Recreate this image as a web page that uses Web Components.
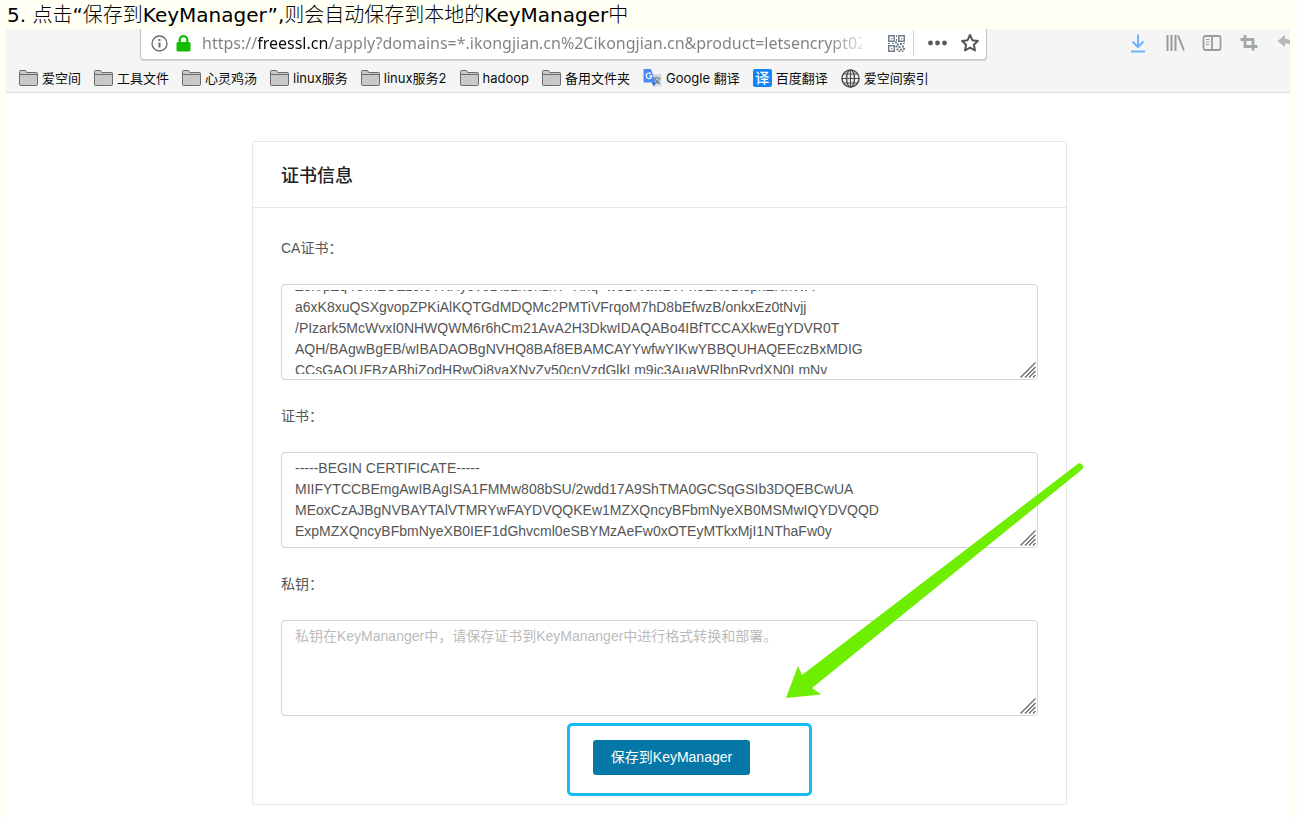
<!DOCTYPE html>
<html lang="zh-CN">
<head>
<meta charset="utf-8">
<title>KeyManager</title>
<style>
body {
    margin: 0;
    background: #fffff3;
    font-family: "Liberation Sans", "Noto Sans CJK SC", sans-serif;
    font-size: 14px;
}
</style>
</head>
<body>

<step-item number="5">点击“保存到KeyManager”,则会自动保存到本地的KeyManager中</step-item>

<browser-window>
    <url-bar slot="toolbar" url="https://freessl.cn/apply?domains=*.ikongjian.cn%2Cikongjian.cn&amp;product=letsencrypt02"></url-bar>
    <tool-buttons slot="toolbar"></tool-buttons>

    <bookmark-link slot="bookmarks">爱空间</bookmark-link>
    <bookmark-link slot="bookmarks">工具文件</bookmark-link>
    <bookmark-link slot="bookmarks">心灵鸡汤</bookmark-link>
    <bookmark-link slot="bookmarks">linux服务</bookmark-link>
    <bookmark-link slot="bookmarks">linux服务2</bookmark-link>
    <bookmark-link slot="bookmarks">hadoop</bookmark-link>
    <bookmark-link slot="bookmarks">备用文件夹</bookmark-link>
    <bookmark-link slot="bookmarks" icon="google">Google 翻译</bookmark-link>
    <bookmark-link slot="bookmarks" icon="baidu">百度翻译</bookmark-link>
    <bookmark-link slot="bookmarks" icon="globe">爱空间索引</bookmark-link>

    <info-card>
        <span slot="title">证书信息</span>
        <text-field label="CA证书：" scroll="14">Z8h/pZq4UmEUEz9l6YKHy9v6Dlb2honzhT+Xhq+w3Brvaw2VFn3EK6BlspkENnWA
a6xK8xuQSXgvopZPKiAlKQTGdMDQMc2PMTiVFrqoM7hD8bEfwzB/onkxEz0tNvjj
/PIzark5McWvxI0NHWQWM6r6hCm21AvA2H3DkwIDAQABo4IBfTCCAXkwEgYDVR0T
AQH/BAgwBgEB/wIBADAOBgNVHQ8BAf8EBAMCAYYwfwYIKwYBBQUHAQEEczBxMDIG
CCsGAQUFBzABhiZodHRwOi8vaXNyZy50cnVzdGlkLm9jc3AuaWRlbnRydXN0LmNv</text-field>
        <text-field label="证书：">-----BEGIN CERTIFICATE-----
MIIFYTCCBEmgAwIBAgISA1FMMw808bSU/2wdd17A9ShTMA0GCSqGSIb3DQEBCwUA
MEoxCzAJBgNVBAYTAlVTMRYwFAYDVQQKEw1MZXQncyBFbmNyeXB0MSMwIQYDVQQD
ExpMZXQncyBFbmNyeXB0IEF1dGhvcml0eSBYMzAeFw0xOTEyMTkxMjI1NThaFw0y</text-field>
        <text-field label="私钥：" placeholder="私钥在KeyMananger中，请保存证书到KeyMananger中进行格式转换和部署。"></text-field>
        <mark-box slot="actions">
            <push-button>保存到KeyManager</push-button>
        </mark-box>
        <mark-arrow slot="overlay"></mark-arrow>
    </info-card>
</browser-window>

<script>
customElements.define('step-item', class extends HTMLElement {
    constructor() {
        super();
        this.attachShadow({ mode: 'open' }).innerHTML = `
        <style>
        :host {
            display: block;
            padding: 2px 7px 0;
            color: #000;
            font: 20px/27px "DejaVu Sans", "Noto Sans CJK SC Light", "Noto Sans CJK SC", sans-serif;
        }
        p { margin: 0; }
        </style>
        <p><span id=number></span> <slot></slot></p>
        `;
    }
    connectedCallback() {
        this.shadowRoot.querySelector('#number').textContent = this.getAttribute('number') + '.';
    }
});

customElements.define('browser-window', class extends HTMLElement {
    constructor() {
        super();
        this.attachShadow({ mode: 'open' }).innerHTML = `
        <style>
        :host {
            display: block;
            margin: 0 8px 0 6px;
            background: #fff;
            overflow: hidden;
        }
        header {
            background: #f5f5f5;
            border-bottom: 1px solid #dcdcdc;
        }
        #toolbar {
            display: flex;
            align-items: flex-start;
            padding-left: 134px;
            height: 34px;
        }
        nav {
            display: flex;
            gap: 13px;
            padding: 0 13px;
            height: 29px;
            overflow: hidden;
        }
        main { padding: 48px 223px 14px 246px; }
        </style>
        <header>
            <div id=toolbar><slot name=toolbar></slot></div>
            <nav><slot name=bookmarks></slot></nav>
        </header>
        <main><slot></slot></main>
        `;
    }
});

customElements.define('url-bar', class extends HTMLElement {
    constructor() {
        super();
        this.attachShadow({ mode: 'open' }).innerHTML = `
        <style>
        :host {
            flex: 1;
            min-width: 0;
            box-sizing: border-box;
            display: flex;
            align-items: center;
            height: 31px;
            padding: 0 6px 2px 10px;
            background: #fff;
            border: 1px solid #c4c4c4;
            border-top: 0;
            border-radius: 0 0 4px 4px;
            box-shadow: 0 1px 1px #d4d4d4;
        }
        svg { display: block; flex: none; }
        button {
            flex: none;
            padding: 0;
            border: 0;
            background: none;
        }
        #lock { margin: 0 11px 0 8px; }
        /* host name in black, the rest in grey, end faded out */
        input {
            flex: 1;
            min-width: 0;
            height: 28px;
            padding: 0;
            border: 0;
            outline: 0;
            font: 16px "Noto Sans", sans-serif;
            color: #808080;
            -webkit-text-fill-color: transparent;
            background: linear-gradient(to right, #808080 55px, #0c0c0d 55px, #0c0c0d 127px, #808080 127px, #808080 626px, #80808000 670px);
            -webkit-background-clip: text;
            background-clip: text;
        }
        #qr { margin: 0 8px 0 26px; }
        i {
            width: 1px;
            height: 26px;
            background: #d2d2d2;
        }
        #more { margin: 0 13px 0 14px; }
        </style>
        <button aria-label="网站信息">
            <svg width="17" height="17" viewBox="0 0 17 17" fill="none" stroke="#6a6a6a">
                <circle cx="8.5" cy="8.5" r="7.5" stroke-width="1.3"/>
                <path d="M8.5 7.5v5" stroke-width="2"/>
                <path d="M8.5 4v2" stroke-width="2"/>
            </svg>
        </button>
        <svg id=lock width="15" height="17" viewBox="0 0 15 17">
            <path d="M3.7 8V5a3.8 3.8 0 0 1 7.600 0v3" fill="none" stroke="#12bc00" stroke-width="2.200"/>
            <rect x=".5" y="7" width="14" height="9.500" rx="1.500" fill="#12bc00"/>
        </svg>
        <input type=text aria-label="网址" spellcheck=false>
        <button id=qr aria-label="二维码">
            <svg width="17" height="17" viewBox="0 0 17 17" fill="#74808c">
                <path fill-rule="evenodd" d="M0 0h7v7H0zM1.500 1.500v4h4v-4zM10 0h7v7h-7zM11.500 1.500v4h4v-4zM0 10h7v7H0zM1.500 11.500v4h4v-4z"/>
                <path d="M3 3h1.200v1.200H3zM13 3h1.200v1.200H13zM3 13h1.200v1.200H3zM8 0h1v2H8zM8 4h1v2H8zM7 6.500h2v2H7zM0 8h2v1H0zM4 8h2v1H4zM9 8.500h2v2H9zM12 8h2v2h-2zM15 8h2v1h-2zM7.500 10.500h2v2h-2zM10.500 11h2v2h-2zM14 10.500h2v2h-2zM8.500 13.500h2v2h-2zM12 13.500h2v2h-2zM15 13h2v2h-2zM10.500 15.500h2V17h-2zM14 15.500h1.500V17H14z"/>
            </svg>
        </button>
        <i></i>
        <button id=more aria-label="更多操作">
            <svg width="19" height="6" viewBox="0 0 19 6" fill="#5a5a5a">
                <circle cx="2.500" cy="3" r="2.400"/><circle cx="9.500" cy="3" r="2.400"/><circle cx="16.500" cy="3" r="2.400"/>
            </svg>
        </button>
        <button aria-label="添加书签">
            <svg width="20" height="20" viewBox="0 0 20 20" fill="none" stroke="#555" stroke-width="2" stroke-linejoin="round">
                <path d="M10 2l2.400 5.200 5.600.7-4.100 3.900 1.100 5.700L10 14.700l-5 2.800 1.100-5.700L2 7.900l5.600-.7z"/>
            </svg>
        </button>
        `;
    }
    connectedCallback() {
        this.shadowRoot.querySelector('input').value = this.getAttribute('url');
    }
});

customElements.define('tool-buttons', class extends HTMLElement {
    constructor() {
        super();
        this.attachShadow({ mode: 'open' }).innerHTML = `
        <style>
        :host {
            flex: 0 0 303px;
            box-sizing: border-box;
            display: flex;
            gap: 17px;
            padding: 4px 0 0 141px;
            overflow: hidden;
        }
        button {
            flex: none;
            padding: 0;
            border: 0;
            background: none;
        }
        svg { display: block; }
        </style>
        <button aria-label="下载">
            <svg width="20" height="20" viewBox="0 0 20 20" fill="none" stroke="#6db4fb" stroke-width="2">
                <path d="M10 1.500v12M4.500 8.500l5.500 5.500 5.500-5.500M3 18.500h14"/>
            </svg>
        </button>
        <button aria-label="书库">
            <svg width="20" height="20" viewBox="0 0 20 20" fill="none" stroke="#9b9b9b" stroke-width="2">
                <path d="M2.500 2v16M6.500 2v16M10.500 2v16M13 2.500l6 15"/>
            </svg>
        </button>
        <button aria-label="侧栏">
            <svg width="20" height="20" viewBox="0 0 20 20" fill="none" stroke="#9b9b9b">
                <rect x="1.500" y="3" width="17" height="14" rx="2" stroke-width="1.800"/>
                <path d="M10 3v14" stroke-width="1.800"/>
                <path d="M4 6.500h3.500M4 9h3.500M4 11.500h3" stroke-width="1.200"/>
            </svg>
        </button>
        <button aria-label="截图">
            <svg width="20" height="20" viewBox="0 0 20 20" fill="none" stroke="#a2a9ac" stroke-width="2.800">
                <path d="M1.500 6.500h12.500v11M6 2v11.500h12.500"/>
            </svg>
        </button>
        <button aria-label="撤销">
            <svg width="20" height="20" viewBox="0 0 20 20" fill="#b3b8ba">
                <path d="M1.500 8L9 2v4c6 0 9 3 9 8 0 1-1 2-1.500 2.500 0-4-2.500-6-7.500-6V14z"/>
            </svg>
        </button>
        `;
    }
});

const bookmarkIcons = {
    folder: `
        <svg width="19" height="16" viewBox="0 0 19 16" fill="#c9c9c9" stroke="#6b6b6b">
            <path d="M.5 14V1.500q0-1 1-1h4.500q1 0 1.300 1l.4 1H17.500q1 0 1 1V14.500q0 1-1 1h-16q-1 0-1-1.500z"/>
            <path d="M1 4.500h17" fill="none"/>
        </svg>`,
    google: `
        <svg width="19" height="18" viewBox="0 0 19 18">
            <path d="M7 5h10.500q1 0 1 1v10.500q0 1-1 1H11z" fill="#d8dade"/>
            <path d="M10.500 9h7M14 7.500V9M12 9.500q1.500 4 5 5M16.500 9.500q-1.500 4-5 5.500" fill="none" stroke="#6c8393" stroke-width="1.200"/>
            <path d="M1.500 0H8l4.500 13.500H1.500q-1 0-1-1V1q0-1 1-1z" fill="#4a8af4"/>
            <path d="M8.500 13.500h4L11 17.500z" fill="#2e5fc0"/>
            <path d="M8 4.800a2.800 2.800 0 1 0 .8 2H6.300" fill="none" stroke="#fff" stroke-width="1.200"/>
        </svg>`,
    baidu: `<b>译</b>`,
    globe: `
        <svg width="19" height="19" viewBox="0 0 19 19" fill="none" stroke="#4f4f4f" stroke-width="1.500">
            <circle cx="9.500" cy="9.500" r="8.500"/>
            <ellipse cx="9.500" cy="9.500" rx="4" ry="8.500"/>
            <path d="M1 9.500h17M2.500 5h14M2.500 14h14M9.500 1v17" stroke-width="1.200"/>
        </svg>`,
};

customElements.define('bookmark-link', class extends HTMLElement {
    constructor() {
        super();
        this.attachShadow({ mode: 'open' }).innerHTML = `
        <style>
        :host {
            display: block;
            flex: none;
            font: 13px/30px Inter, "Noto Sans CJK SC", sans-serif;
        }
        a {
            display: flex;
            align-items: center;
            gap: 4px;
            color: #0c0c0d;
            text-decoration: none;
        }
        #icon { display: flex; }
        b {
            width: 19px;
            border-radius: 2px;
            background: #1584f8;
            color: #fff;
            font-size: 14px;
            font-weight: 500;
            line-height: 18px;
            text-align: center;
        }
        </style>
        <a href="#"><span id=icon></span><slot></slot></a>
        `;
    }
    connectedCallback() {
        let icon = this.getAttribute('icon') || 'folder';
        this.shadowRoot.querySelector('#icon').innerHTML = bookmarkIcons[icon];
    }
});

customElements.define('info-card', class extends HTMLElement {
    constructor() {
        super();
        this.attachShadow({ mode: 'open' }).innerHTML = `
        <style>
        :host {
            display: block;
            position: relative;
            border: 1px solid #e6e6e6;
            border-radius: 2px;
        }
        h2 {
            margin: 0;
            padding: 19px 28px 16px;
            border-bottom: 1px solid #e6e6e6;
            color: #222;
            font-size: 18px;
            font-weight: 500;
            line-height: 30px;
        }
        #body { padding: 4px 28px 0; }
        #actions {
            display: flex;
            justify-content: center;
            padding: 7px 0 8px 60px;
        }
        </style>
        <h2><slot name=title></slot></h2>
        <div id=body>
            <slot></slot>
            <div id=actions><slot name=actions></slot></div>
        </div>
        <slot name=overlay></slot>
        `;
    }
});

customElements.define('text-field', class extends HTMLElement {
    constructor() {
        super();
        this.attachShadow({ mode: 'open' }).innerHTML = `
        <style>
        :host {
            display: block;
            color: #555;
        }
        label {
            display: block;
            line-height: 72px;
        }
        #box {
            position: relative;
            padding: 5px 13px;
            border: 1px solid #d6d6d6;
            border-radius: 4px;
            background: #fff;
        }
        textarea {
            display: block;
            box-sizing: border-box;
            width: 100%;
            height: 84px;
            padding: 0;
            border: 0;
            outline: 0;
            resize: none;
            overflow: hidden;
            background: none;
            color: inherit;
            font: inherit;
            line-height: 21px;
        }
        textarea::placeholder { color: #bbb; }
        svg {
            position: absolute;
            right: 1px;
            bottom: 1px;
        }
        </style>
        <label for=input></label>
        <div id=box>
            <textarea id=input spellcheck=false></textarea>
            <svg width="16" height="16" viewBox="0 0 16 16" fill="none" stroke="#666" stroke-width="1.200">
                <path d="M.5 15.500l15-15M5 15.500L15.500 5M9 15.500l6.500-6.500M13 15.500l2.500-2.500"/>
            </svg>
        </div>
        `;
    }
    connectedCallback() {
        let input = this.shadowRoot.querySelector('textarea');
        this.shadowRoot.querySelector('label').textContent = this.getAttribute('label');
        input.placeholder = this.getAttribute('placeholder') || '';
        input.value = this.textContent;
        input.scrollTop = this.getAttribute('scroll') || 0;
    }
});

customElements.define('push-button', class extends HTMLElement {
    constructor() {
        super();
        this.attachShadow({ mode: 'open' }).innerHTML = `
        <style>
        :host { display: block; }
        button {
            display: block;
            padding: 0 18px;
            border: 0;
            border-radius: 3px;
            background: #0678a8;
            color: #fff;
            font: inherit;
            line-height: 35px;
            white-space: nowrap;
        }
        </style>
        <button><slot></slot></button>
        `;
    }
});

// blue frame drawn round a control
customElements.define('mark-box', class extends HTMLElement {
    constructor() {
        super();
        this.attachShadow({ mode: 'open' }).innerHTML = `
        <style>
        :host {
            display: block;
            padding: 14px 59px 18px 23px;
            border: 3px solid #14bdf4;
            border-radius: 5px;
        }
        </style>
        <slot></slot>
        `;
    }
});

customElements.define('mark-arrow', class extends HTMLElement {
    constructor() {
        super();
        this.attachShadow({ mode: 'open' }).innerHTML = `
        <style>
        :host {
            position: absolute;
            right: -18px;
            bottom: 105px;
            pointer-events: none;
        }
        svg { display: block; }
        </style>
        <svg width="298" height="236" viewBox="0 0 298 236" fill="#6eee00">
            <path d="M0 235L12 203l4 9L291 1.500a3.500 3.500 0 0 1 5 5L26 225l9 6.500z"/>
        </svg>
        `;
    }
});
</script>
</body>
</html>
